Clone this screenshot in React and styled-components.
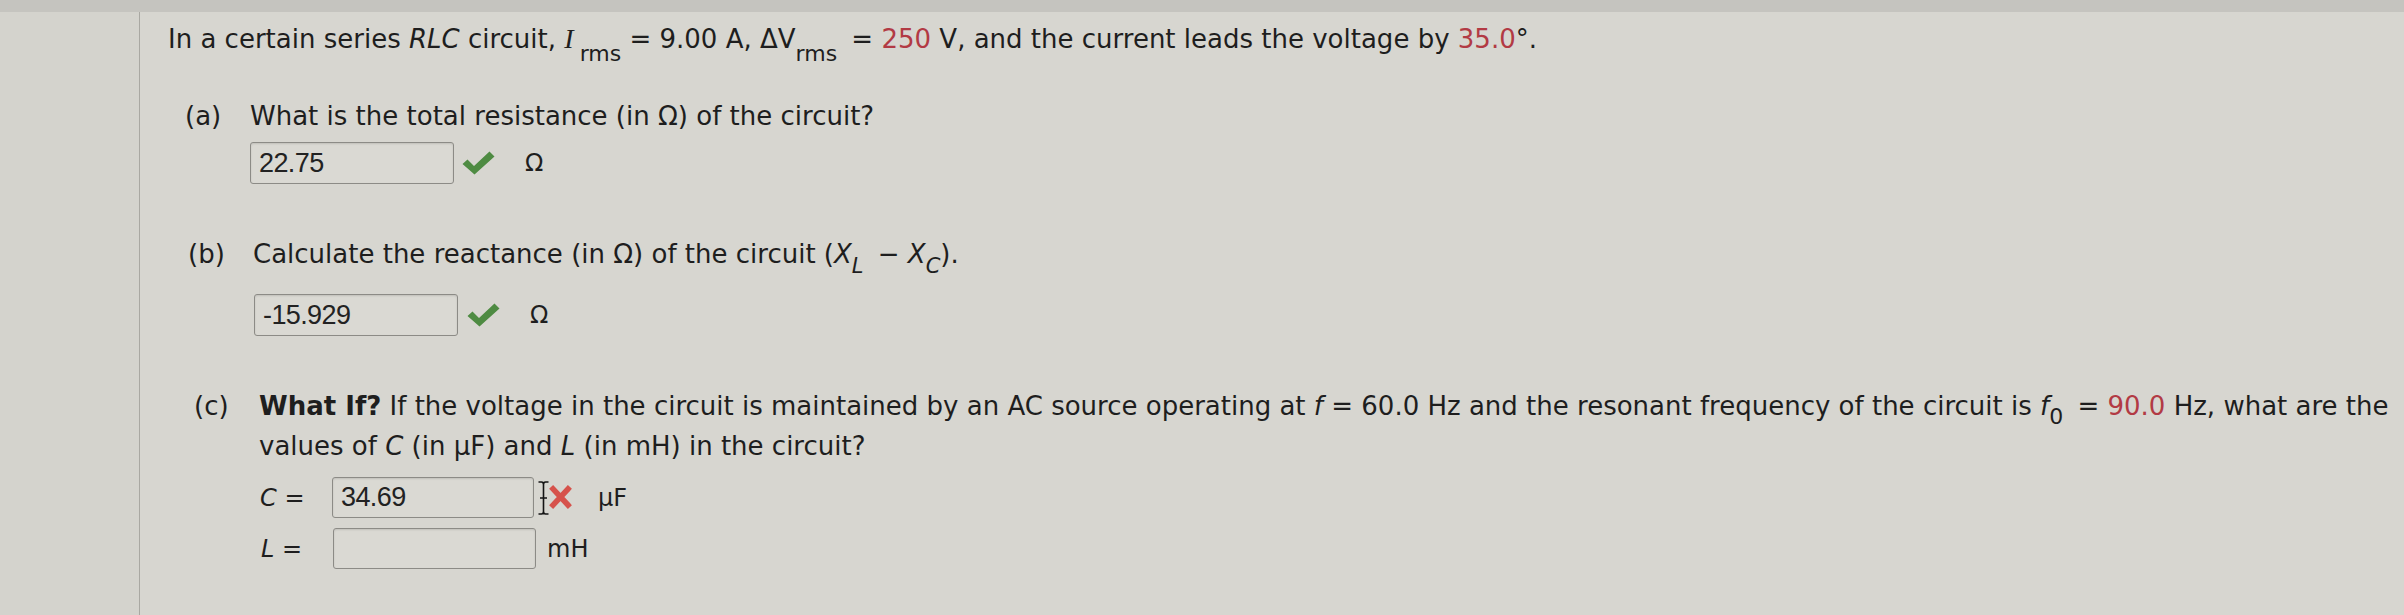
import React from 'react';
import styled, { createGlobalStyle } from 'styled-components';

const GlobalStyle = createGlobalStyle`
  html, body {
    margin: 0;
    padding: 0;
    background: #d6d5cf;
  }
  body {
    font-family: "DejaVu Sans", Verdana, sans-serif;
    color: #1e1e1e;
  }
`;

const Page = styled.div`
  width: 2404px;
  height: 615px;
  overflow: hidden;
  display: flex;
  flex-direction: column;
  background: #d7d6d0;
`;

const TopBar = styled.div`
  flex: none;
  height: 12px;
  background: #c5c4bf;
`;

const Body = styled.div`
  flex: 1;
  display: flex;
`;

const Gutter = styled.div`
  flex: none;
  width: 139px;
  background: #d4d3cd;
  border-right: 1px solid #a9a8a2;
`;

const Content = styled.div`
  flex: 1;
  min-width: 0;
  padding: 9px 0 0 28px;
  font-size: 26px;
  line-height: 36px;
`;

const Intro = styled.p`
  margin: 0;
  white-space: nowrap;
`;

const Part = styled.div`
  display: grid;
  grid-template-columns: 65px 1fr;
  margin-top: ${p => p.$top}px;
  padding-left: ${p => p.$shift}px;
  line-height: ${p => p.$lh || 36}px;
`;

const Label = styled.div`
  white-space: nowrap;
`;

const Question = styled.div`
  white-space: nowrap;
`;

const Bold = styled.b`
  font-weight: bold;
`;

const Red = styled.span`
  color: #b23a44;
`;

const Var = styled.i`
  font-style: italic;
  font-family: ${p => (p.$serif ? '"Liberation Serif", serif' : '"DejaVu Sans", sans-serif')};
  font-size: ${p => (p.$serif ? '28px' : 'inherit')};
`;

const Sub = styled.sub`
  font-style: ${p => (p.$italic ? 'italic' : 'normal')};
  font-size: ${p => p.$size || 22}px;
  vertical-align: ${p => p.$drop || -13}px;
  line-height: 0;
  margin-left: ${p => p.$before || 0}px;
  margin-right: ${p => p.$after || 0}px;
`;

const AnswerRow = styled.div`
  display: flex;
  align-items: center;
  margin-top: ${p => p.$gap}px;
  margin-left: ${p => p.$indent || 0}px;
  font-size: 24px;
  line-height: 1;
`;

const Field = styled.div`
  flex: none;
  box-sizing: border-box;
  width: ${p => p.$w || 204}px;
  height: ${p => p.$h || 42}px;
  padding-left: 8px;
  display: flex;
  align-items: center;
  background: #dad9d3;
  border: 1px solid #8c8b86;
  border-radius: 3px;
  box-shadow: inset 0 1px 2px rgba(0, 0, 0, 0.12);
  font-family: "Liberation Sans", Arial, sans-serif;
  font-size: 27px;
  letter-spacing: -0.6px;
  color: #222;
`;

const Mark = styled.span`
  display: inline-flex;
  align-items: center;
  margin-left: ${p => p.$left}px;
  margin-right: ${p => p.$right}px;
`;

const Unit = styled.span`
  font-size: 24px;
  margin-left: ${p => p.$left || 0}px;
`;

const Rows = styled.div`
  display: flex;
  flex-direction: column;
  gap: 10px;
  margin-top: 11px;
`;

const InputRow = styled.div`
  display: flex;
  align-items: center;
  font-size: 24px;
  line-height: 1;
  margin-left: ${p => p.$indent || 0}px;
`;

const RowLabel = styled.div`
  flex: none;
  width: 72px;
  white-space: nowrap;
`;

const Check = () => (
  <svg width="33" height="24" viewBox="0 0 33 24">
    <path d="M0.5 13 L5.5 8.5 L12 15 L27.5 0.5 L32.5 5.5 L12.5 23.5 Z" fill="#4e8b42" />
  </svg>
);

const CrossWithCursor = () => (
  <svg width="36" height="36" viewBox="0 0 36 36">
    <path d="M16 9 L31 25 M31 9 L16 25" stroke="#d6524b" strokeWidth="5.5" strokeLinecap="square" />
    <path d="M1.5 2 H4.5 Q6.5 2 6.5 4.5 V31.5 Q6.5 34 4.5 34 H1.5 M11.5 2 H8.5 Q6.5 2 6.5 4.5 M6.5 31.5 Q6.5 34 8.5 34 H11.5 M3 18 H10"
      stroke="#141414" strokeWidth="1.6" fill="none" />
  </svg>
);

export default function App() {
  return (
    <>
      <GlobalStyle />
      <Page>
        <TopBar />
        <Body>
          <Gutter />
          <Content>
            <Intro>
              In a certain series <Var>RLC</Var> circuit, <Var $serif>I</Var>
              <Sub $before={6}>rms</Sub> = 9.00 A, ΔV<Sub $after={6}>rms</Sub> = <Red>250</Red> V, and the current leads the voltage by <Red>35.0</Red>°.
            </Intro>

            <Part $top={41} $shift={17}>
              <Label>(a)</Label>
              <div>
                <Question>What is the total resistance (in Ω) of the circuit?</Question>
                <AnswerRow $gap={8}>
                  <Field>22.75</Field>
                  <Mark $left={8} $right={30}><Check /></Mark>
                  <Unit>Ω</Unit>
                </AnswerRow>
              </div>
            </Part>

            <Part $top={52} $shift={20}>
              <Label>(b)</Label>
              <div>
                <Question>
                  Calculate the reactance (in Ω) of the circuit (<Var>X</Var>
                  <Sub $italic $size={21} $drop={-10} $after={6}>L</Sub> − <Var>X</Var>
                  <Sub $italic $size={21} $drop={-10}>C</Sub>).
                </Question>
                <AnswerRow $gap={22} $indent={1}>
                  <Field>-15.929</Field>
                  <Mark $left={9} $right={30}><Check /></Mark>
                  <Unit>Ω</Unit>
                </AnswerRow>
              </div>
            </Part>

            <Part $top={50} $shift={26} $lh={40}>
              <Label>(c)</Label>
              <div>
                <Question>
                  <Bold>What If?</Bold> If the voltage in the circuit is maintained by an AC source operating at <Var>f</Var> = 60.0 Hz and the resonant frequency of the circuit is <Var>f</Var>
                  <Sub $size={22} $drop={-9} $after={6}>0</Sub> = <Red>90.0</Red> Hz, what are the
                  <br />
                  values of <Var>C</Var> (in µF) and <Var>L</Var> (in mH) in the circuit?
                </Question>
                <Rows>
                  <InputRow $indent={1}>
                    <RowLabel><Var>C</Var> =</RowLabel>
                    <Field $w={202} $h={41}>34.69</Field>
                    <Mark $left={3} $right={25}><CrossWithCursor /></Mark>
                    <Unit>µF</Unit>
                  </InputRow>
                  <InputRow $indent={2}>
                    <RowLabel><Var>L</Var> =</RowLabel>
                    <Field $w={203} $h={41} />
                    <Unit $left={11}>mH</Unit>
                  </InputRow>
                </Rows>
              </div>
            </Part>
          </Content>
        </Body>
      </Page>
    </>
  );
}
